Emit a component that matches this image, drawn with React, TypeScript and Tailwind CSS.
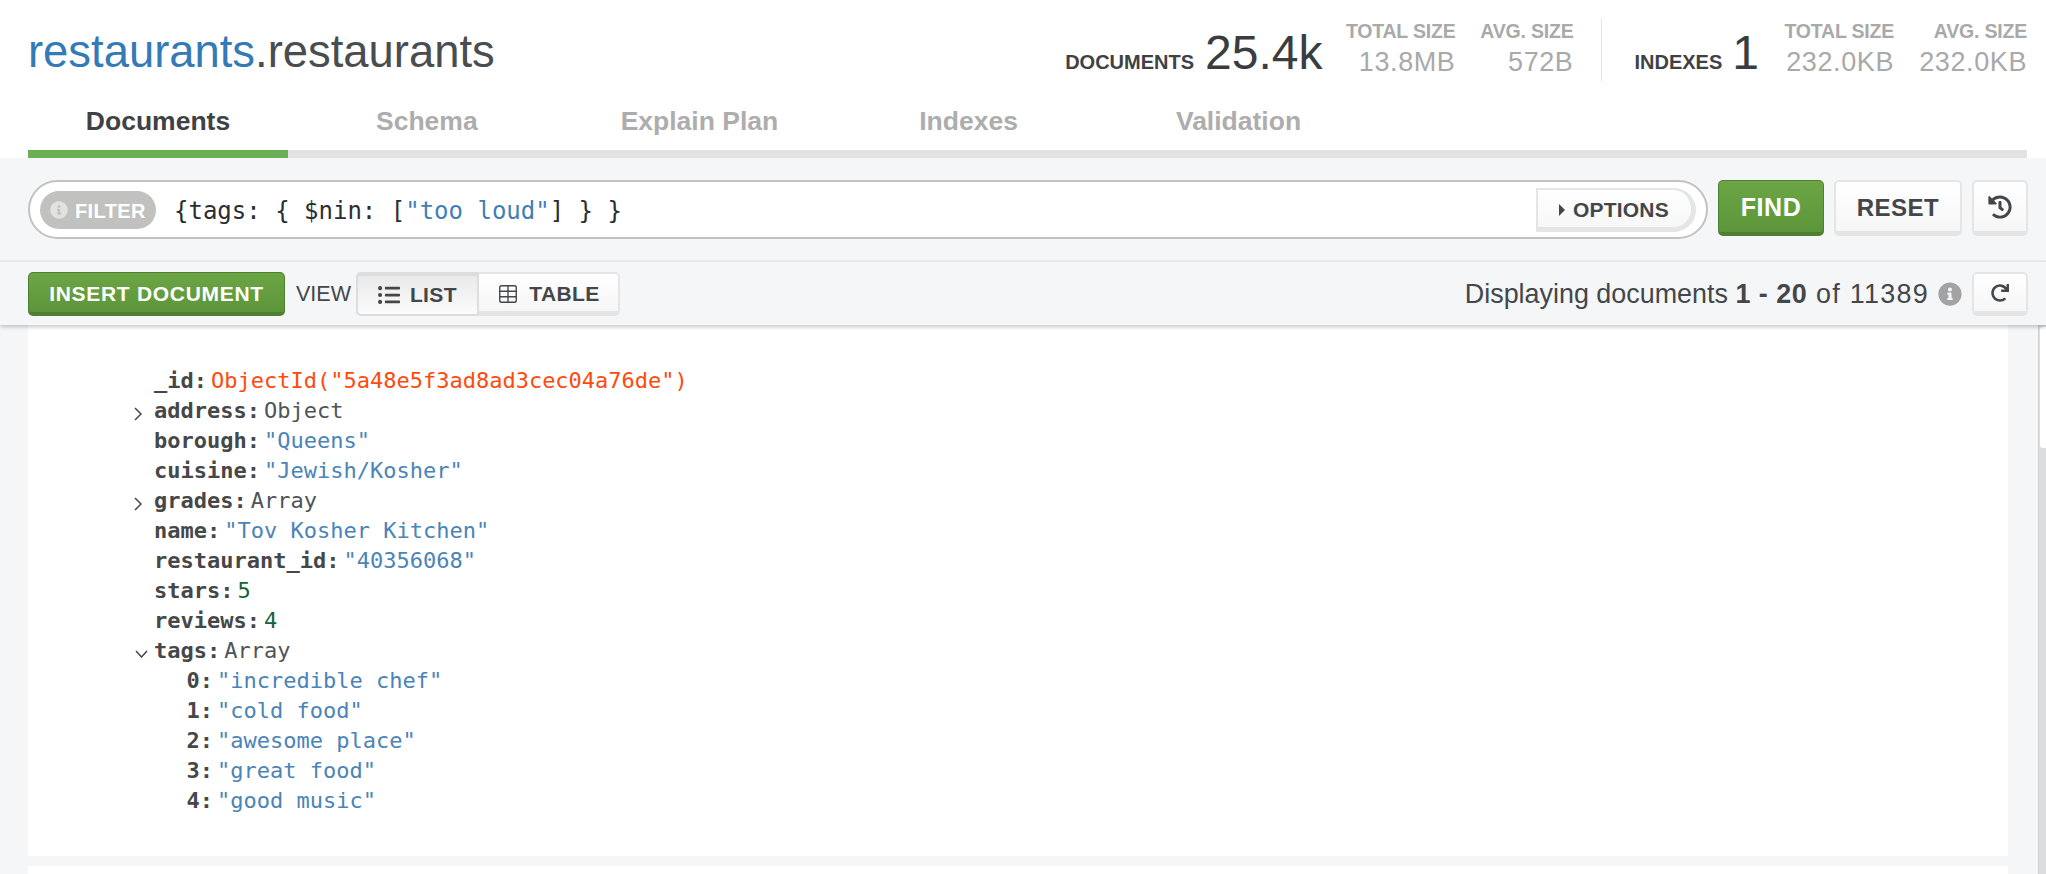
import { FaHistory, FaInfoCircle, FaListUl, FaRedo } from 'react-icons/fa'
import { Table } from 'lucide-react'

const tabs = [
  { label: 'Documents', cls: 'w-[260px] justify-center text-[#3f4245]' },
  { label: 'Schema', cls: 'ml-[88px]' },
  { label: 'Explain Plan', cls: 'ml-[143px]' },
  { label: 'Indexes', cls: 'ml-[141px]' },
  { label: 'Validation', cls: 'ml-[158px]' },
]

type Row = { k: string; v: string; c: string; arrow?: 'right' | 'down'; sub?: boolean }

const STR = 'text-[#4a84b8]'
const NUM = 'text-[#16623a]'
const OBJ = 'text-[#505457]'

const rows: Row[] = [
  { k: '_id', v: 'ObjectId("5a48e5f3ad8ad3cec04a76de")', c: 'text-[#ff4a0d]' },
  { k: 'address', v: 'Object', c: OBJ, arrow: 'right' },
  { k: 'borough', v: '"Queens"', c: STR },
  { k: 'cuisine', v: '"Jewish/Kosher"', c: STR },
  { k: 'grades', v: 'Array', c: OBJ, arrow: 'right' },
  { k: 'name', v: '"Tov Kosher Kitchen"', c: STR },
  { k: 'restaurant_id', v: '"40356068"', c: STR },
  { k: 'stars', v: '5', c: NUM },
  { k: 'reviews', v: '4', c: NUM },
  { k: 'tags', v: 'Array', c: OBJ, arrow: 'down' },
  { k: '0', v: '"incredible chef"', c: STR, sub: true },
  { k: '1', v: '"cold food"', c: STR, sub: true },
  { k: '2', v: '"awesome place"', c: STR, sub: true },
  { k: '3', v: '"great food"', c: STR, sub: true },
  { k: '4', v: '"good music"', c: STR, sub: true },
]

function StatCol({ label, value, cls }: { label: string; value: string; cls: string }) {
  return (
    <div className={`flex flex-col items-end ${cls}`}>
      <div className="mt-[20px] text-[19.5px] leading-[22px] font-bold tracking-[-0.2px] whitespace-nowrap text-[#a9a9a9]">{label}</div>
      <div className="mt-[5px] text-[27px] leading-[30px] tracking-[0.6px] whitespace-nowrap text-[#a9a9a9]">{value}</div>
    </div>
  )
}

function GhostButton({ className, children }: { className: string; children: React.ReactNode }) {
  return (
    <button className={`flex items-center justify-center rounded-[5px] border-2 border-b-[5px] border-[#e4e5e6] bg-gradient-to-b from-white to-[#f6f6f6] text-[#43474a] ${className}`}>
      {children}
    </button>
  )
}

function Arrow({ dir }: { dir: 'right' | 'down' }) {
  if (dir === 'right') {
    return (
      <svg className="absolute top-[11px] -left-[20px] h-[14px] w-[8px] text-[#43474a]" viewBox="0 0 8 14" fill="none" stroke="currentColor" strokeWidth="1.5">
        <path d="M1 1l6 6-6 6" />
      </svg>
    )
  }
  return (
    <svg className="absolute top-[14px] -left-[19px] h-[8px] w-[13px] text-[#43474a]" viewBox="0 0 13 8" fill="none" stroke="currentColor" strokeWidth="1.5">
      <path d="M1 1l5.5 6L12 1" />
    </svg>
  )
}

export default function App() {
  return (
    <div className="flex h-screen flex-col overflow-hidden bg-[#f5f6f7] font-['Liberation_Sans',Arial,sans-serif]">
      <header className="bg-white pr-[19px] pl-[28px]">
        <div className="flex h-[100px] items-start">
          <h1 className="mt-[25px] text-[45.4px] leading-[54px] text-[#4a4d50]">
            <span className="text-[#337ab7]">restaurants</span>.restaurants
          </h1>
          <div className="ml-auto flex">
            <div className="mt-[33px] mr-[11px] flex h-[44px] items-end pb-[3px] text-[20px] leading-[24px] font-bold text-[#3f4245]">DOCUMENTS</div>
            <div className="mt-[27px] text-[48px] leading-[52px] text-[#3a3d40]">25.4k</div>
            <StatCol label="TOTAL SIZE" value="13.8MB" cls="ml-[24px] w-[109px]" />
            <StatCol label="AVG. SIZE" value="572B" cls="ml-[23px] w-[95px]" />
            <div className="mt-[18px] mr-[32px] ml-[28px] h-[64px] w-px bg-[#e6e6e6]" />
            <div className="mt-[33px] mr-[10px] flex h-[44px] items-end pb-[3px] text-[20px] leading-[24px] font-bold text-[#3f4245]">INDEXES</div>
            <div className="mt-[27px] text-[48px] leading-[52px] text-[#3a3d40]">1</div>
            <StatCol label="TOTAL SIZE" value="232.0KB" cls="ml-[26px] w-[109px]" />
            <StatCol label="AVG. SIZE" value="232.0KB" cls="ml-[24px] w-[109px]" />
          </div>
        </div>
        <nav className="flex h-[58px] border-b-[8px] border-[#e2e2e2] text-[26.5px] font-bold text-[#adadad]">
          {tabs.map((t) => (
            <div key={t.label} className={`relative flex h-[50px] items-center pb-[6px] ${t.cls}`}>
              {t.label}
              {t.label === 'Documents' && <div className="absolute top-[50px] right-0 left-0 h-[8px] bg-[#6cae54]" />}
            </div>
          ))}
        </nav>
      </header>

      <div className="flex h-[104px] shrink-0 items-start border-b-2 border-[#ebecee] pt-[22px] pr-[18px] pl-[28px]">
        <div className="flex h-[59px] w-[1680px] items-center rounded-full border-2 border-[#c2c2c0] bg-white px-[10px]">
          <div className="flex h-[38px] w-[116px] items-center rounded-full bg-[#c1c1bf] pl-[10px] text-[20px] font-bold tracking-[0.4px] text-white">
            <FaInfoCircle className="mr-[7px] h-[18px] w-[18px] text-[#e2e2e0]" />
            <span className="pt-[2px]">FILTER</span>
          </div>
          <div className="ml-[18px] pt-[2px] font-['DejaVu_Sans_Mono',monospace] text-[24px] whitespace-pre text-[#2b2e31]">
            {'{tags: { $nin: ['}<span className="text-[#3f7fb5]">"too loud"</span>{'] } }'}
          </div>
          <div className="ml-auto flex h-[44px] w-[160px] items-center justify-center rounded-r-full border-2 border-r-[5px] border-b-[5px] border-[#e4e5e6] bg-gradient-to-b from-white to-[#f7f7f7] pt-[3px] pr-[1px] text-[21px] font-bold tracking-[0.2px] text-[#43474a]">
            <span className="mr-[8px] h-0 w-0 border-y-[6px] border-l-[6px] border-y-transparent border-l-[#43474a]" />
            OPTIONS
          </div>
        </div>
        <button className="ml-[10px] h-[56px] w-[106px] rounded-[5px] border border-b-[4px] border-[#4f7f31] bg-gradient-to-b from-[#6ca544] to-[#5d963a] pt-[3px] text-[25px] font-bold tracking-[0.6px] text-white">FIND</button>
        <GhostButton className="ml-[10px] h-[56px] w-[128px] pt-[3px] text-[24px] font-bold tracking-[0.5px]">RESET</GhostButton>
        <GhostButton className="ml-[10px] h-[56px] w-[56px]">
          <FaHistory className="h-[24px] w-[24px]" />
        </GhostButton>
      </div>

      <div className="relative z-10 flex h-[63px] shrink-0 items-start pt-[10px] pr-[18px] pl-[28px] shadow-[0_2px_4px_rgba(0,0,0,0.22)]">
        <button className="h-[44px] w-[257px] rounded-[5px] border border-b-[4px] border-[#4f7f31] bg-gradient-to-b from-[#6ca544] to-[#5d963a] pt-[2px] text-[21px] font-bold tracking-[0.7px] text-white">INSERT DOCUMENT</button>
        <span className="ml-[11px] text-[21.5px] leading-[44px] text-[#43474a]">VIEW</span>
        <div className="ml-[5px] flex h-[44px] w-[123px] items-center justify-center rounded-l-[5px] border-2 border-t-[4px] border-[#dcdddf] bg-gradient-to-b from-[#eaeaea] to-[#fbfbfb] text-[21px] font-bold tracking-[0.4px] text-[#43474a]">
          <FaListUl className="mr-[10px] h-[22px] w-[22px]" />
          LIST
        </div>
        <div className="flex h-[44px] w-[141px] items-center justify-center rounded-r-[5px] border-2 border-b-[5px] border-l-0 border-[#e4e5e6] bg-gradient-to-b from-white to-[#f6f6f6] pt-[2px] text-[21px] font-bold tracking-[0.4px] text-[#43474a]">
          <Table className="mr-[10px] h-[22px] w-[22px]" strokeWidth={1.5} />
          TABLE
        </div>
        <div className="ml-auto flex h-[44px] items-center text-[26.9px] whitespace-pre text-[#43474a]">
          Displaying documents <b className="tracking-[0.5px]">1 - 20</b><span className="tracking-[1.3px]"> of 11389</span>
          <FaInfoCircle className="ml-[9px] h-[24px] w-[24px] text-[#a3a3a3]" />
        </div>
        <GhostButton className="ml-[10px] h-[44px] w-[56px]">
          <FaRedo className="h-[18px] w-[18px]" />
        </GhostButton>
      </div>

      <div className="flex min-h-0 flex-1">
        <main className="flex-1 overflow-hidden pr-[30px] pl-[28px]">
          <div className="h-[531px] bg-white pt-[41px] pl-[126px] font-['DejaVu_Sans_Mono',monospace] text-[22px] leading-[30px]">
            {rows.map((r) => (
              <div key={r.k + r.v} className={`relative flex h-[30px] whitespace-pre ${r.sub ? 'pl-[32.5px]' : ''}`}>
                {r.arrow && <Arrow dir={r.arrow} />}
                <span className="font-bold text-[#454749]">{r.k}:</span>
                <span className={`ml-[4px] ${r.c}`}>{r.v}</span>
              </div>
            ))}
          </div>
          <div className="mt-[10px] h-[20px] bg-white" />
        </main>
        <div className="relative w-[8px] shrink-0 border-l border-[#cfd0d2] bg-[#dcdde0]">
          <div className="absolute top-[2px] right-0 left-[1px] h-[121px] rounded-l-[3px] bg-white" />
        </div>
      </div>
    </div>
  )
}
